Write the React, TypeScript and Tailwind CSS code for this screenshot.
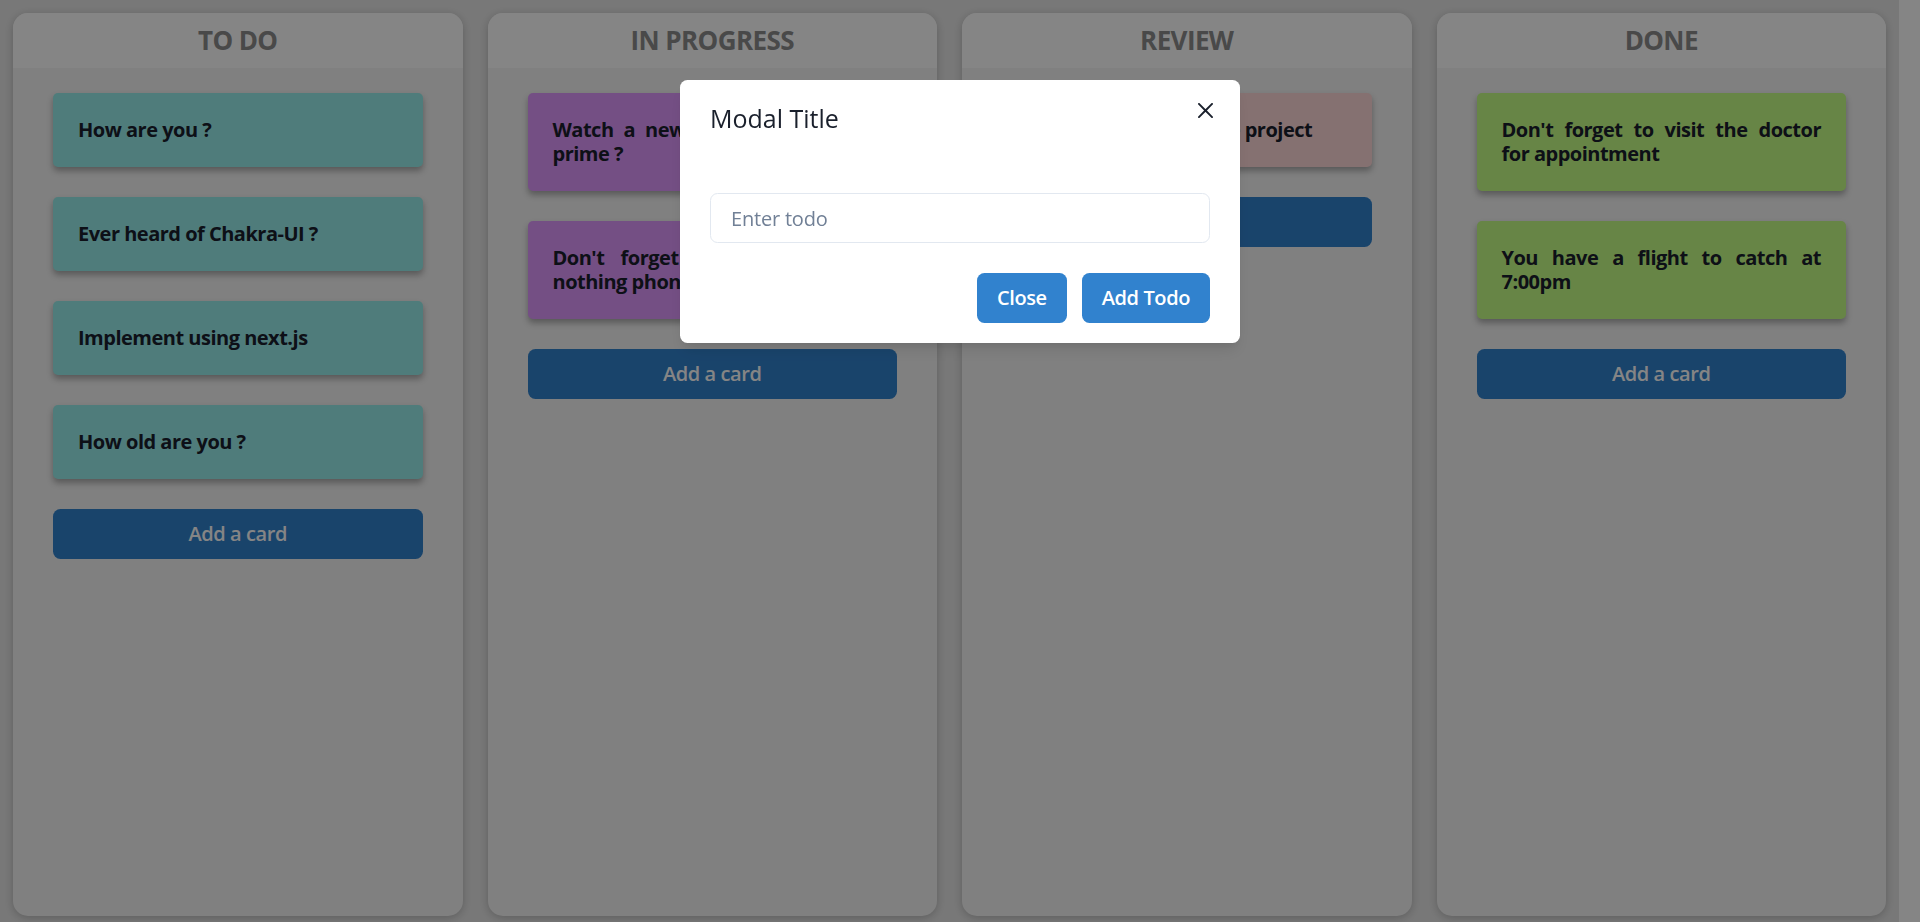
import { useState } from "react"

type Task = { id: number; text: string }
type Column = { title: string; color: string; tasks: Task[] }

const columns: Column[] = [
  {
    title: "TO DO",
    color: "bg-[#98eeec]",
    tasks: [
      { id: 1, text: "How are you ?" },
      { id: 2, text: "Ever heard of Chakra-UI ?" },
      { id: 3, text: "Implement using next.js" },
      { id: 4, text: "How old are you ?" },
    ],
  },
  {
    title: "IN PROGRESS",
    color: "bg-[#df98fe]",
    tasks: [
      { id: 5, text: "Watch a new series on amazon prime ?" },
      { id: 6, text: "Don't forget to buy the new nothing phone" },
    ],
  },
  {
    title: "REVIEW",
    color: "bg-[#ffd9d9]",
    tasks: [{ id: 7, text: "Review the side hustle project" }],
  },
  {
    title: "DONE",
    color: "bg-[#c5ff86]",
    tasks: [
      { id: 8, text: "Don't forget to visit the doctor for appointment" },
      { id: 9, text: "You have a flight to catch at 7:00pm" },
    ],
  },
]

function CloseIcon() {
  return (
    <svg viewBox="0 0 24 24" className="h-[15px] w-[15px]" fill="currentColor">
      <path d="M.439,21.44a1.5,1.5,0,0,0,2.122,2.121L11.823,14.3a.25.25,0,0,1,.354,0l9.262,9.263a1.5,1.5,0,1,0,2.122-2.121L14.3,12.177a.25.25,0,0,1,0-.354l9.263-9.262A1.5,1.5,0,0,0,21.439.44L12.177,9.7a.25.25,0,0,1-.354,0L2.561.44A1.5,1.5,0,0,0,.439,2.561L9.7,11.823a.25.25,0,0,1,0,.354Z" />
    </svg>
  )
}

/**
 * Una columna del tablero con sus tarjetas
 */
function BoardColumn({ column }: { column: Column }) {
  return (
    <div className="flex h-[903px] flex-1 flex-col overflow-hidden rounded-[15px] bg-[#f5f5f5] shadow-[0_2px_10px_rgba(0,0,0,0.22)]">
      <div className="flex h-[55px] shrink-0 items-center justify-center bg-white">
        <h2 className="text-[26px] font-bold tracking-[-0.6px] text-[#8c8c8c]">{column.title}</h2>
      </div>
      <div className="flex flex-col gap-[30px] px-[40px] pt-[25px]">
        {column.tasks.map((task) => (
          <div
            key={task.id}
            className={`${column.color} rounded-[5px] p-[25px] text-justify text-[20px] font-bold leading-[24px] tracking-[-0.5px] text-[#1a202c] shadow-[0_4px_6px_rgba(0,0,0,0.3)]`}
          >
            {task.text}
          </div>
        ))}
        <button className="h-[50px] rounded-[7.5px] bg-[#3182ce] text-[20px] font-semibold tracking-[-0.4px] text-white">
          Add a card
        </button>
      </div>
    </div>
  )
}

export default function App() {
  const [todo, setTodo] = useState("")
  const [open, setOpen] = useState(true)

  return (
    <div className="h-screen w-full overflow-hidden bg-white font-['Open_Sans',sans-serif]">
      <div className="flex h-screen w-[1899px] gap-[25px] bg-[#e7e7e7] px-[13px] pt-[13px]">
        {columns.map((column) => (
          <BoardColumn key={column.title} column={column} />
        ))}
      </div>

      {open && (
        <div className="fixed inset-0 flex items-start justify-center bg-[rgba(0,0,0,0.48)] pt-[80px]">
          <section className="relative w-[560px] rounded-[7.5px] bg-white shadow-[0_10px_15px_-3px_rgba(0,0,0,0.1),0_4px_6px_-2px_rgba(0,0,0,0.05)]">
            <header className="px-[30px] py-[20px] text-[25px] font-medium leading-[37.5px] text-[#1a202c]">
              Modal Title
            </header>
            <button
              onClick={() => setOpen(false)}
              className="absolute right-[15px] top-[10px] flex h-[40px] w-[40px] items-center justify-center rounded-[7.5px] text-[#1a202c]"
              aria-label="Close"
            >
              <CloseIcon />
            </button>
            <div className="px-[30px] pb-[10px] pt-[35.5px]">
              <input
                value={todo}
                onChange={(e) => setTodo(e.target.value)}
                placeholder="Enter todo"
                className="h-[50px] w-full rounded-[7.5px] border border-[#e2e8f0] px-[20px] text-[20px] tracking-[-0.2px] text-[#1a202c] outline-none placeholder:text-[#718096]"
              />
            </div>
            <footer className="flex justify-end gap-[15px] px-[30px] py-[20px]">
              <button
                onClick={() => setOpen(false)}
                className="h-[50px] rounded-[7.5px] bg-[#3182ce] px-[20px] text-[20px] font-semibold tracking-[-0.4px] text-white"
              >
                Close
              </button>
              <button className="h-[50px] rounded-[7.5px] bg-[#3182ce] px-[20px] text-[20px] font-semibold tracking-[-0.4px] text-white">
                Add Todo
              </button>
            </footer>
          </section>
        </div>
      )}
    </div>
  )
}
